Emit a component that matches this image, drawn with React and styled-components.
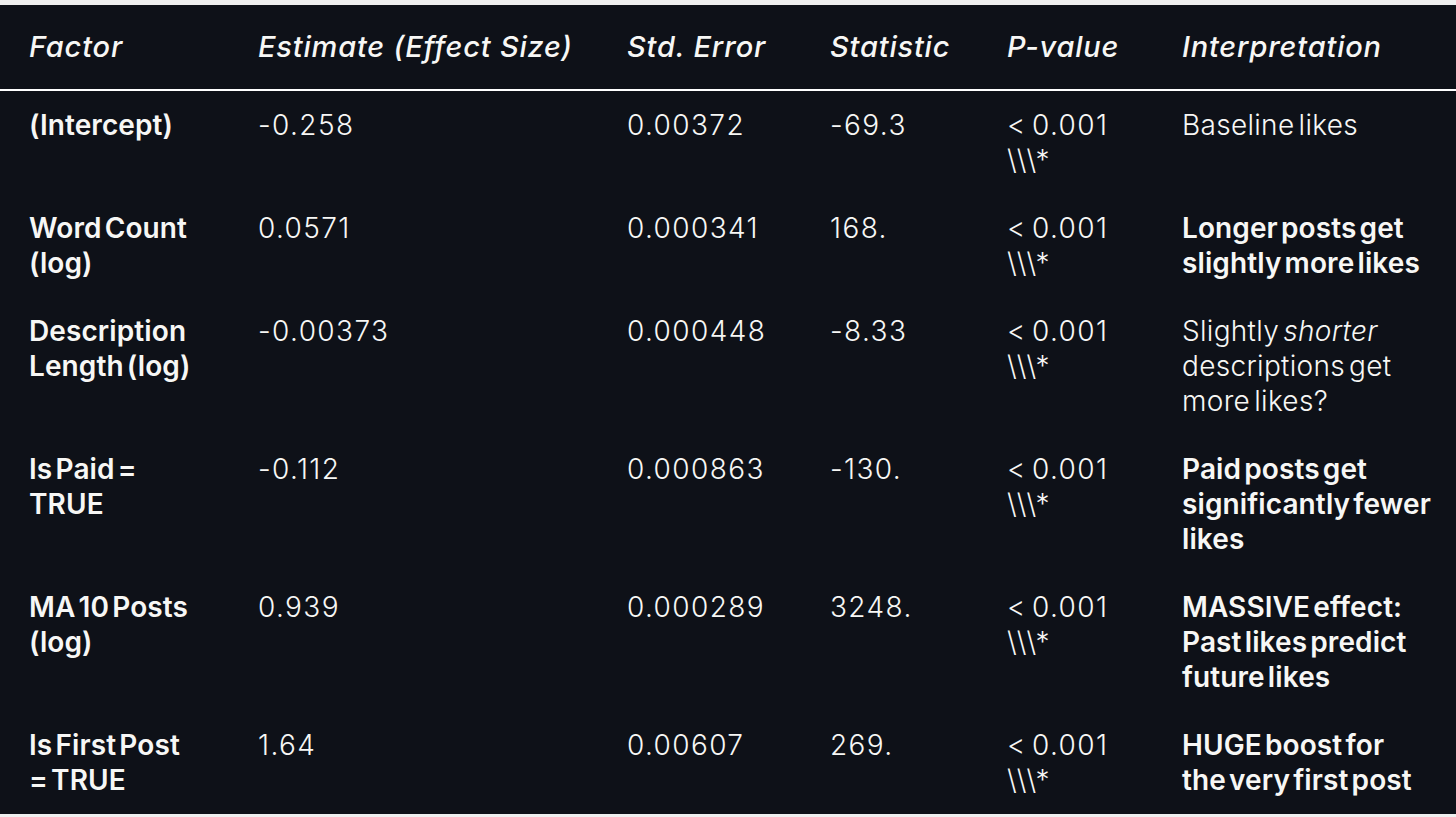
import React from "react";
import styled, { createGlobalStyle } from "styled-components";

const GlobalStyle = createGlobalStyle`
  html, body {
    margin: 0;
    padding: 0;
    background: #efefef;
  }
  body {
    font-family: "Inter", "Noto Sans", sans-serif;
  }
`;

const Page = styled.div`
  padding-top: 5px;
  min-height: 817px;
  box-sizing: border-box;
`;

const Table = styled.div`
  background: #0e1118;
  color: #f7f7f5;
  display: grid;
  grid-template-columns: 258px 369px 203px 177px 175px 1fr;
`;

const HeadCell = styled.div`
  font-size: 29px;
  font-style: italic;
  font-weight: 500;
  letter-spacing: 0.8px;
  line-height: 35px;
  padding: 24px 0 25px ${(p) => (p.$first ? "29px" : "0")};
  border-bottom: 2px solid #ffffff;
  white-space: nowrap;
`;

const Cell = styled.div`
  font-size: 28px;
  line-height: 35px;
  font-weight: ${(p) => (p.$bold ? 600 : 300)};
  letter-spacing: ${(p) => (p.$num ? "1.4px" : p.$bold ? "0.1px" : "0.3px")};
  word-spacing: -4px;
  padding: 17px 0 16px ${(p) => (p.$first ? "29px" : "0")};
  em {
    font-style: italic;
  }
`;

const Line = styled.span`
  display: block;
  white-space: nowrap;
`;

const columns = [
  "Factor",
  "Estimate (Effect Size)",
  "Std. Error",
  "Statistic",
  "P-value",
  "Interpretation",
];

const pValue = ["< 0.001", "\\\\\\*"];

const rows = [
  {
    factor: ["(Intercept)"],
    est: "-0.258",
    se: "0.00372",
    stat: "-69.3",
    interp: ["Baseline likes"],
    bold: false,
  },
  {
    factor: ["Word Count", "(log)"],
    est: "0.0571",
    se: "0.000341",
    stat: "168.",
    interp: ["Longer posts get", "slightly more likes"],
    bold: true,
  },
  {
    factor: ["Description", "Length (log)"],
    est: "-0.00373",
    se: "0.000448",
    stat: "-8.33",
    interp: [
      <>
        Slightly <em>shorter</em>
      </>,
      "descriptions get",
      "more likes?",
    ],
    bold: false,
  },
  {
    factor: ["Is Paid =", "TRUE"],
    est: "-0.112",
    se: "0.000863",
    stat: "-130.",
    interp: ["Paid posts get", "significantly fewer", "likes"],
    bold: true,
  },
  {
    factor: ["MA 10 Posts", "(log)"],
    est: "0.939",
    se: "0.000289",
    stat: "3248.",
    interp: ["MASSIVE effect:", "Past likes predict", "future likes"],
    bold: true,
  },
  {
    factor: ["Is First Post", "= TRUE"],
    est: "1.64",
    se: "0.00607",
    stat: "269.",
    interp: ["HUGE boost for", "the very first post"],
    bold: true,
  },
];

const Lines = ({ items }) =>
  items.map((t, i) => <Line key={i}>{t}</Line>);

export default function App() {
  return (
    <Page>
      <GlobalStyle />
      <Table>
        {columns.map((c, i) => (
          <HeadCell key={c} $first={i === 0}>
            {c}
          </HeadCell>
        ))}
        {rows.map((r, i) => (
          <React.Fragment key={i}>
            <Cell $bold $first>
              <Lines items={r.factor} />
            </Cell>
            <Cell $num>{r.est}</Cell>
            <Cell $num>{r.se}</Cell>
            <Cell $num>{r.stat}</Cell>
            <Cell $num>
              <Lines items={pValue} />
            </Cell>
            <Cell $bold={r.bold}>
              <Lines items={r.interp} />
            </Cell>
          </React.Fragment>
        ))}
      </Table>
    </Page>
  );
}
